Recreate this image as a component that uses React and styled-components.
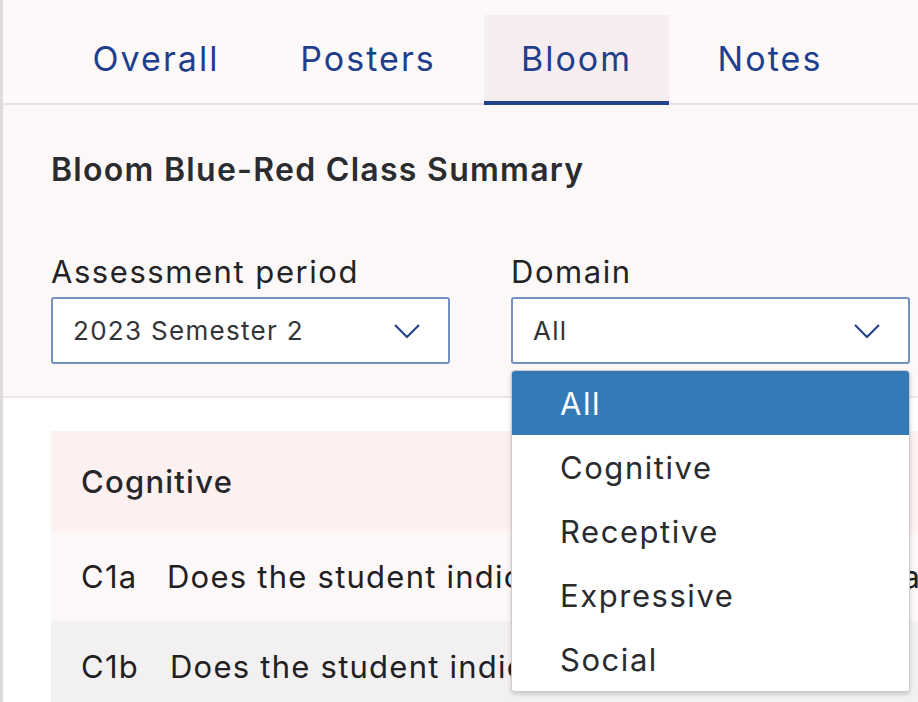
import React from "react";
import styled, { createGlobalStyle } from "styled-components";

const GlobalStyle = createGlobalStyle`
  body {
    margin: 0;
    background: #ffffff;
    font-family: Inter, "Noto Sans", "Liberation Sans", sans-serif;
    color: #2a2b2e;
  }
`;

export const Page = styled.div`
  position: relative;
  width: 918px;
  height: 702px;
  overflow: hidden;
  border-left: 3px solid #dedbdc;
  box-sizing: border-box;
  background: #ffffff;
`;

export const TabBar = styled.nav`
  display: flex;
  gap: 16px;
  padding: 15px 0 0 57px;
  height: 105px;
  box-sizing: border-box;
  background: #fdf9f9;
  border-bottom: 2px solid #ebe0e3;
`;

export const Tab = styled.div`
  display: flex;
  align-items: center;
  justify-content: center;
  width: ${(props) => props.w}px;
  height: 90px;
  box-sizing: border-box;
  padding-top: 1px;
  font-size: 34px;
  letter-spacing: 0.06em;
  color: #1f3f8c;
  background: ${(props) => (props.active ? "#f6eeee" : "transparent")};
  border-bottom: 4px solid ${(props) => (props.active ? "#22418f" : "transparent")};
`;

export const Summary = styled.section`
  background: #fdf8f8;
  padding: 45px 0 32px 48px;
  border-bottom: 2px solid #efe4e6;
`;

export const Title = styled.h2`
  margin: 0;
  font-size: 32px;
  font-weight: 600;
  letter-spacing: 0.04em;
  line-height: 40px;
  color: #2a2c30;
`;

export const Filters = styled.div`
  display: flex;
  gap: 61px;
  margin-top: 64px;
`;

export const Field = styled.div`
  display: flex;
  flex-direction: column;
  width: 399px;
`;

export const Label = styled.label`
  font-size: 31px;
  letter-spacing: 0.05em;
  line-height: 36px;
  margin-bottom: 7px;
  color: #222326;
`;

export const SelectWrap = styled.div`
  position: relative;
`;

export const Select = styled.div`
  display: flex;
  align-items: center;
  justify-content: space-between;
  height: 67px;
  box-sizing: border-box;
  padding: 0 27px 0 20px;
  background: #ffffff;
  border: 2px solid #7391c2;
  border-radius: 3px;
  font-size: 26px;
  letter-spacing: 0.05em;
  color: #333438;
`;

export const Menu = styled.ul`
  position: absolute;
  top: calc(100% + 6px);
  left: 0;
  width: 399px;
  box-sizing: border-box;
  margin: 0;
  padding: 0;
  list-style: none;
  background: #ffffff;
  border: 1px solid #cfcbcc;
  border-radius: 4px;
  box-shadow: 0 2px 4px rgba(0, 0, 0, 0.18);
  z-index: 10;
  overflow: hidden;
`;

export const Option = styled.li`
  display: flex;
  align-items: center;
  height: 64px;
  padding-left: 48px;
  font-size: 31px;
  letter-spacing: 0.05em;
  color: ${(props) => (props.selected ? "#ffffff" : "#2a2b2e")};
  background: ${(props) => (props.selected ? "#337ab7" : "#ffffff")};
`;

export const Content = styled.section`
  padding: 33px 0 0 48px;
`;

export const Table = styled.div`
  width: 900px;
  display: flex;
  flex-direction: column;
`;

export const GroupHeader = styled.div`
  display: flex;
  align-items: center;
  height: 100px;
  padding-left: 30px;
  background: #fdf0f0;
  font-size: 31px;
  font-weight: 500;
  letter-spacing: 0.04em;
  color: #26272a;
`;

export const Row = styled.div`
  display: flex;
  align-items: center;
  height: 90px;
  padding-left: 30px;
  background: ${(props) => (props.alt ? "#f2f0f1" : "#fdf8f8")};
  font-size: 31px;
  letter-spacing: 0.04em;
  white-space: nowrap;
  color: #1f2023;
`;

export const Code = styled.span`
  width: ${(props) => props.w}px;
  flex-shrink: 0;
`;

function Chevron() {
  return (
    <svg width="28" height="16" viewBox="0 0 28 16" fill="none">
      <path d="M2 2 L14 14 L26 2" stroke="#24448c" strokeWidth="2.2" />
    </svg>
  );
}

const tabs = [
  { name: "Overall", w: 192 },
  { name: "Posters", w: 200 },
  { name: "Bloom", w: 185, active: true },
  { name: "Notes", w: 170 },
];

const options = ["All", "Cognitive", "Receptive", "Expressive", "Social"];

export default function App() {
  return (
    <>
      <GlobalStyle />
      <Page>
        <TabBar>
          {tabs.map((tab) => (
            <Tab key={tab.name} w={tab.w} active={tab.active}>
              {tab.name}
            </Tab>
          ))}
        </TabBar>
        <Summary>
          <Title>Bloom Blue-Red Class Summary</Title>
          <Filters>
            <Field>
              <Label>Assessment period</Label>
              <SelectWrap>
                <Select>
                  <span>2023 Semester 2</span>
                  <Chevron />
                </Select>
              </SelectWrap>
            </Field>
            <Field>
              <Label>Domain</Label>
              <SelectWrap>
                <Select>
                  <span>All</span>
                  <Chevron />
                </Select>
                <Menu>
                  {options.map((opt, i) => (
                    <Option key={opt} selected={i === 0}>
                      {opt}
                    </Option>
                  ))}
                </Menu>
              </SelectWrap>
            </Field>
          </Filters>
        </Summary>
        <Content>
          <Table>
            <GroupHeader>Cognitive</GroupHeader>
            <Row>
              <Code w={86}>C1a</Code>
              Does the student indicate awareness of the space around them?
            </Row>
            <Row alt>
              <Code w={89}>C1b</Code>
              Does the student indicate an interest in people and objects?
            </Row>
          </Table>
        </Content>
      </Page>
    </>
  );
}
